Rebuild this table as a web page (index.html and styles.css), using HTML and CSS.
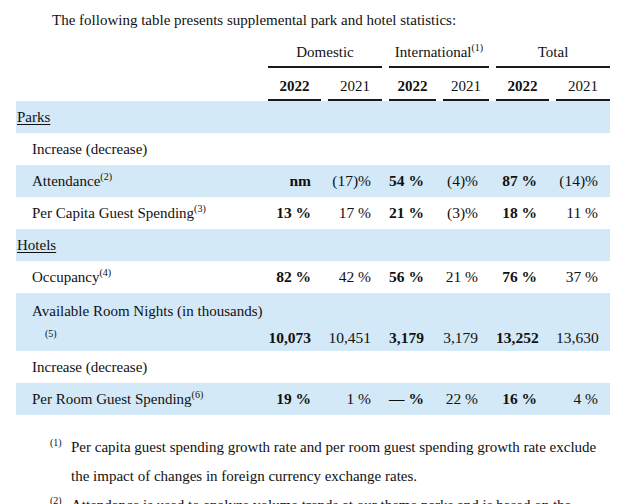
FILE: index.html
```html
<!DOCTYPE html>
<html>
<head>
<meta charset="utf-8">
<link rel="stylesheet" href="styles.css">
</head>
<body>
<div class="page">
  <p class="intro">The following table presents supplemental park and hotel statistics:</p>
  <table class="stats">
    <colgroup>
      <col class="w-label"><col class="w-53"><col class="w-61"><col class="w-54"><col class="w-53"><col class="w-60"><col class="w-61">
    </colgroup>
    <thead>
      <tr class="group-row">
        <th></th>
        <th colspan="2" class="first"><div class="rule">Domestic</div></th>
        <th colspan="2"><div class="rule">International<sup>(1)</sup></div></th>
        <th colspan="2"><div class="rule">Total</div></th>
      </tr>
      <tr class="year-row">
        <th></th>
        <th class="first"><div class="rule bold">2022</div></th>
        <th><div class="rule">2021</div></th>
        <th><div class="rule bold">2022</div></th>
        <th><div class="rule">2021</div></th>
        <th><div class="rule bold">2022</div></th>
        <th><div class="rule">2021</div></th>
      </tr>
    </thead>
    <tbody>
      <tr class="band"><td colspan="7" class="section"><span class="ul">Parks</span></td></tr>
      <tr><td colspan="7" class="label">Increase (decrease)</td></tr>
      <tr class="band data">
        <td class="label">Attendance<sup>(2)</sup></td>
        <td class="num bold">nm</td><td class="num">(17)%</td><td class="num bold">54 %</td><td class="num">(4)%</td><td class="num bold">87 %</td><td class="num">(14)%</td>
      </tr>
      <tr class="data">
        <td class="label">Per Capita Guest Spending<sup>(3)</sup></td>
        <td class="num bold">13 %</td><td class="num">17 %</td><td class="num bold">21 %</td><td class="num">(3)%</td><td class="num bold">18 %</td><td class="num">11 %</td>
      </tr>
      <tr class="band"><td colspan="7" class="section"><span class="ul">Hotels</span></td></tr>
      <tr class="data">
        <td class="label">Occupancy<sup>(4)</sup></td>
        <td class="num bold">82 %</td><td class="num">42 %</td><td class="num bold">56 %</td><td class="num">21 %</td><td class="num bold">76 %</td><td class="num">37 %</td>
      </tr>
      <tr class="band wrap-top"><td colspan="7" class="label">Available Room Nights (in thousands)</td></tr>
      <tr class="band data wrap-bottom">
        <td class="label sub-label"><sup>(5)</sup></td>
        <td class="num bold">10,073</td><td class="num">10,451</td><td class="num bold">3,179</td><td class="num">3,179</td><td class="num bold">13,252</td><td class="num">13,630</td>
      </tr>
      <tr><td colspan="7" class="label">Increase (decrease)</td></tr>
      <tr class="band data">
        <td class="label">Per Room Guest Spending<sup>(6)</sup></td>
        <td class="num bold">19 %</td><td class="num">1 %</td><td class="num bold">— %</td><td class="num">22 %</td><td class="num bold">16 %</td><td class="num">4 %</td>
      </tr>
    </tbody>
  </table>
  <div class="notes">
    <div class="note">
      <span class="mark">(1)</span>
      <span class="note-text">Per capita guest spending growth rate and per room guest spending growth rate exclude the impact of changes in foreign currency exchange rates.</span>
    </div>
    <div class="note">
      <span class="mark">(2)</span>
      <span class="note-text">Attendance is used to analyze volume trends at our theme parks and is based on the number of unique daily entries.</span>
    </div>
  </div>
</div>
</body>
</html>
```

FILE: styles.css
```css
html, body {
  margin: 0;
  padding: 0;
  background: #ffffff;
}

body {
  font-family: "Liberation Serif", "Times New Roman", serif;
  font-size: 15px;
  color: #111111;
  overflow: hidden;
}

.page {
  width: 640px;
}

.intro {
  margin: 0;
  padding: 10px 0 0 52px;
  line-height: 20px;
}

.stats {
  margin: 12px 0 0 16px;
  width: 594px;
  table-layout: fixed;
  border-collapse: separate;
  border-spacing: 0;
}

.w-label { width: 252px; }
.w-53 { width: 53px; }
.w-54 { width: 54px; }
.w-60 { width: 60px; }
.w-61 { width: 61px; }

th {
  font-weight: normal;
  padding: 0 0 0 7px;
  text-align: center;
  line-height: 20px;
}

th.first,
th:first-child {
  padding-left: 0;
}

.rule {
  border-bottom: 2px solid #1a1a1a;
}

.group-row .rule {
  padding-bottom: 4px;
}

.year-row th {
  padding-top: 8px;
}

.year-row .rule {
  padding-bottom: 3px;
}

.bold {
  font-weight: bold;
}

sup {
  font-size: 10px;
  line-height: 0;
  vertical-align: 6px;
}

td {
  padding: 6px 0;
  line-height: 20px;
  white-space: nowrap;
}

.band td {
  background: #d3e9f8;
}

.section {
  padding-left: 1px;
}

.ul {
  text-decoration: underline;
  text-underline-offset: 2px;
}

.label {
  padding-left: 16px;
}

.num {
  font-size: 15.5px;
  text-align: right;
  padding-left: 7px;
  padding-right: 11px;
}

.data td:nth-child(2) { padding-left: 0; padding-right: 10px; }
.data td:nth-child(3) { padding-right: 11px; }
.data td:nth-child(4) { padding-right: 13px; }
.data td:nth-child(5) { padding-right: 11px; }
.data td:nth-child(6) { padding-right: 12px; }
.data td:nth-child(7) { padding-right: 12px; }

.wrap-top td {
  padding-top: 8px;
  padding-bottom: 6px;
}

.wrap-bottom td {
  padding-top: 1px;
  padding-bottom: 3px;
}

.sub-label {
  padding-left: 29px;
}

.notes {
  margin: 18px 0 0 50px;
  width: 556px;
}

.note {
  display: grid;
  grid-template-columns: 21px 1fr;
  line-height: 29px;
}

.mark {
  font-size: 10px;
  line-height: 20px;
}
```
